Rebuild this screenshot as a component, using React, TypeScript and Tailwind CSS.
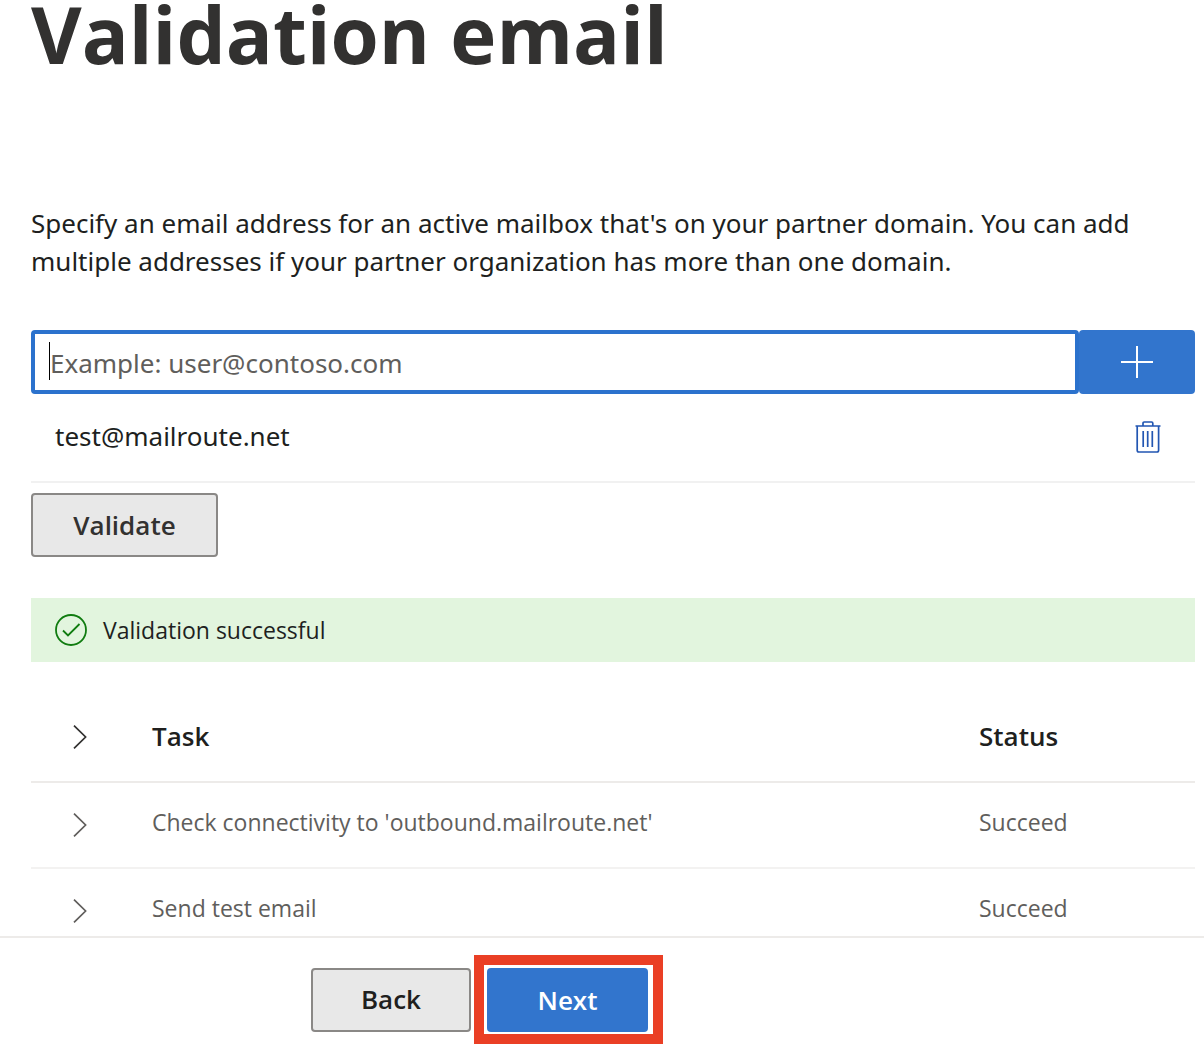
import React from "react";

const tasks = [
  { name: "Check connectivity to 'outbound.mailroute.net'", status: "Succeed" },
  { name: "Send test email", status: "Succeed" },
];

function PlusIcon() {
  return (
    <svg className="h-8 w-8" viewBox="0 0 32 32" fill="none" stroke="currentColor" strokeWidth="2" aria-hidden="true">
      <path d="M16 0v32M0 16h32" />
    </svg>
  );
}

function TrashIcon() {
  return (
    <svg className="h-8 w-[26px]" viewBox="0 0 26 32" fill="none" stroke="currentColor" strokeWidth="1.7" aria-hidden="true">
      <path d="M0.5 5h25M8 5V2.2Q8 1 9.2 1h7.4Q17.8 1 17.8 2.2V5" />
      <path d="M2.2 5v24.3Q2.2 31 3.9 31h18Q23.6 31 23.6 29.3V5" />
      <path d="M8.2 10v16M12.7 10v16M17.3 10v16" />
    </svg>
  );
}

function CheckCircleIcon() {
  return (
    <svg className="h-8 w-8 text-[#107c10]" viewBox="0 0 32 32" fill="none" stroke="currentColor" strokeWidth="1.8" aria-hidden="true">
      <circle cx="16" cy="16" r="15" />
      <path d="M8 16.5l5 5L24.5 10" />
    </svg>
  );
}

function Chevron() {
  return (
    <svg className="h-6 w-[14px]" viewBox="0 0 14 24" fill="none" stroke="currentColor" strokeWidth="1.7" aria-hidden="true">
      <path d="M1 0.6L12.6 12L1 23.4" />
    </svg>
  );
}

function ExpandButton({ label }: { label: string }) {
  return (
    <button type="button" aria-label={label} className="flex h-8 w-8 items-center justify-center">
      <Chevron />
    </button>
  );
}

export default function App() {
  return (
    <div className="flex h-screen flex-col bg-white font-['Open_Sans','Noto_Sans',sans-serif] text-[#201f1e]">
      <main className="min-h-0 flex-1 overflow-y-auto pr-[9px] pl-[31px] [scrollbar-width:none]">
        <h1 className="text-[78px] leading-[68px] font-bold text-[#323130]">Validation email</h1>
        <p className="mt-[136px] font-['Noto_Sans','Open_Sans',sans-serif] text-[26px] leading-[38px]">
          Specify an email address for an active mailbox that's on your partner domain. You can add multiple
          addresses if your partner organization has more than one domain.
        </p>
        <div className="mt-[50px] flex h-16">
          <div className="relative flex-1">
            <input
              type="email"
              aria-label="Email address"
              placeholder="Example: user@contoso.com"
              className="h-full w-full rounded border-4 border-[#2b72cd] px-[15px] pt-[2px] font-['Noto_Sans','Open_Sans',sans-serif] text-[26px] outline-none placeholder:text-[#605e5c]"
            />
            <span className="absolute top-3 left-[18px] h-[38px] w-px bg-black" aria-hidden="true" />
          </div>
          <button
            type="button"
            aria-label="Add email address"
            className="flex w-[116px] items-center justify-center rounded bg-[#3275cd] text-white"
          >
            <PlusIcon />
          </button>
        </div>
        <ul>
          <li className="flex h-[89px] items-center justify-between border-b-2 border-[#f1f1f1] pr-[34px] pb-[2px] pl-6 font-['Noto_Sans','Open_Sans',sans-serif] text-[26px]">
            <span>test@mailroute.net</span>
            <button type="button" aria-label="Remove test@mailroute.net" className="text-[#2256b2]">
              <TrashIcon />
            </button>
          </li>
        </ul>
        <button
          type="button"
          className="mt-[10px] flex h-16 w-[187px] items-center justify-center rounded border-2 border-[#8a8886] bg-[#e8e8e8] text-[26px] font-semibold text-[#323130]"
        >
          Validate
        </button>
        <div role="status" className="mt-[41px] flex h-16 items-center gap-4 bg-[#e2f5de] px-6 text-[23px]">
          <CheckCircleIcon />
          <span>Validation successful</span>
        </div>
        <table className="mt-[30px] w-full text-left">
          <thead>
            <tr className="h-[90px] border-b-2 border-[#edebe9] text-[26px]">
              <th className="w-[121px] pl-[33px] text-[#323130]">
                <ExpandButton label="Expand all tasks" />
              </th>
              <th className="font-semibold">Task</th>
              <th className="w-[216px] font-semibold">Status</th>
            </tr>
          </thead>
          <tbody>
            {tasks.map((task) => (
              <tr key={task.name} className="h-[86px] border-b-2 border-[#f3f2f1] text-[23px] text-[#605e5c]">
                <td className="pl-[33px]">
                  <ExpandButton label={`Expand ${task.name}`} />
                </td>
                <td className="pb-[6px]">{task.name}</td>
                <td className="pb-[6px]">{task.status}</td>
              </tr>
            ))}
          </tbody>
        </table>
      </main>
      <footer className="flex items-center gap-[3px] border-t-2 border-[#edebe9] pt-[17px] pb-[10px] pl-[311px] text-[26px] font-semibold">
        <button
          type="button"
          className="flex h-16 w-40 items-center justify-center rounded border-2 border-[#8a8886] bg-[#e8e8e8] text-[#201f1e]"
        >
          Back
        </button>
        <div className="border-[10px] border-[#ea3f25] pt-[3px] pr-[5px] pb-[2px] pl-[3px]">
          <button type="button" className="flex h-16 w-[161px] items-center justify-center rounded bg-[#3275cd] text-white">
            Next
          </button>
        </div>
      </footer>
    </div>
  );
}
